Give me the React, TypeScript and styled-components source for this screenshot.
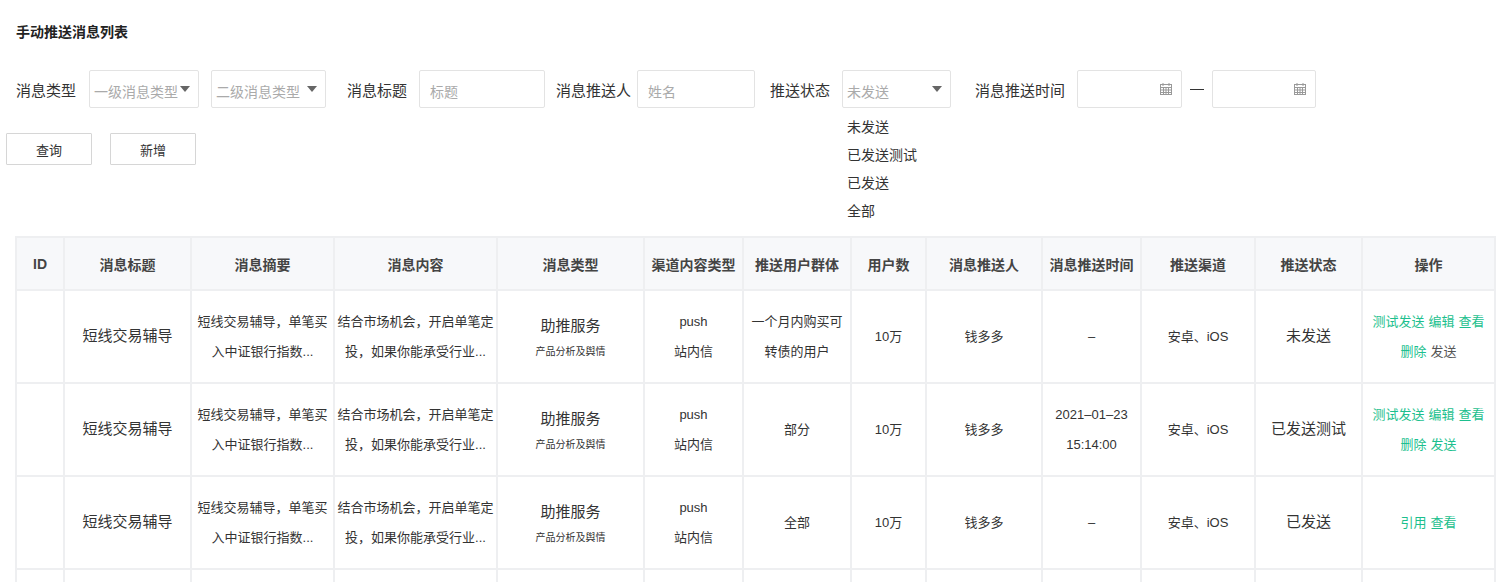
import React from 'react';
import styled, { createGlobalStyle } from 'styled-components';

const GlobalStyle = createGlobalStyle`
  body {
    margin: 0;
    font-family: "Liberation Sans", "Noto Sans CJK SC", sans-serif;
    color: #333;
    background: #fff;
  }
`;

const Page = styled.div`
  padding: 22px 0 0 0;
  height: 582px;
  overflow: hidden;
`;

const Title = styled.h1`
  margin: 0 0 28px 16px;
  font-size: 14px;
  font-weight: bold;
  color: #222;
  line-height: 20px;
`;

const FilterRow = styled.div`
  display: flex;
  align-items: center;
  padding-left: 16px;
  height: 38px;
`;

const Label = styled.span<{ gap?: number }>`
  font-size: 15px;
  color: #333;
  margin-right: ${({ gap }) => gap ?? 12}px;
  margin-left: ${({ gap }) => (gap === undefined ? 0 : 0)}px;
  white-space: nowrap;
`;

const Box = styled.div<{ w: number; ml?: number }>`
  position: relative;
  box-sizing: border-box;
  width: ${({ w }) => w}px;
  margin-left: ${({ ml }) => ml ?? 0}px;
  height: 38px;
  border: 1px solid #e3e3e3;
  border-radius: 2px;
  display: flex;
  align-items: center;
  padding: 0 8px 0 4px;
  font-size: 14px;
  color: #aaa;
`;

const BoxText = styled.span`
  flex: 1;
  white-space: nowrap;
  padding-top: 3px;
`;

const Caret = styled.span`
  width: 0;
  height: 0;
  border-left: 5px solid transparent;
  border-right: 5px solid transparent;
  border-top: 6px solid #666;
`;

const Options = styled.div`
  position: absolute;
  top: 42px;
  left: 4px;
  display: flex;
  flex-direction: column;
  font-size: 14px;
  color: #333;
  line-height: 28px;
  white-space: nowrap;
`;

const Dash = styled.span`
  margin: 0 8px;
  width: 14px;
  height: 1px;
  background: #333;
`;

const ButtonRow = styled.div`
  display: flex;
  gap: 18px;
  padding-left: 6px;
  margin-top: 25px;
`;

const Button = styled.button`
  width: 86px;
  height: 32px;
  border: 1px solid #d6d6d6;
  background: #fff;
  font-family: inherit;
  font-size: 13px;
  color: #333;
  border-radius: 1px;
`;

const Table = styled.table`
  margin: 71px 0 0 15px;
  border-collapse: collapse;
  table-layout: fixed;
  width: 1479px;
  font-size: 13px;
  color: #333;
`;

const Th = styled.th`
  height: 51px;
  background: #f7f8fa;
  border: 2px solid #eeeff1;
  font-size: 14px;
  font-weight: 600;
  color: #444;
  padding: 0;
`;

const Td = styled.td`
  height: 91px;
  border: 2px solid #eeeff1;
  text-align: center;
  vertical-align: middle;
  line-height: 30px;
  padding: 0 2px;
`;

const BigText = styled.span`
  font-size: 15px;
`;

const Small = styled.div`
  font-size: 10px;
  line-height: 20px;
`;

const Link = styled.span<{ off?: boolean }>`
  color: ${({ off }) => (off ? '#555' : '#1dbf8e')};
  margin: 0 2px;
`;

const CalIcon = () => (
  <svg width="14" height="14" viewBox="0 0 14 14" fill="none" stroke="#999" strokeWidth="1">
    <rect x="1.5" y="2.5" width="11" height="10" />
    <path d="M1.5 5.5h11M1.5 8h11M1.5 10.5h11M4.5 5.5v7M7 5.5v7M9.5 5.5v7M4 1v3M10 1v3" />
  </svg>
);

const cols = [48, 127, 143, 163, 147, 99, 108, 75, 116, 99, 114, 107, 133];
const heads = ['ID', '消息标题', '消息摘要', '消息内容', '消息类型', '渠道内容类型', '推送用户群体', '用户数', '消息推送人', '消息推送时间', '推送渠道', '推送状态', '操作'];

type Row = { group: React.ReactNode; time: React.ReactNode; status: string; ops: React.ReactNode };

const rows: Row[] = [
  {
    group: <>一个月内购买可<br />转债的用户</>,
    time: '–',
    status: '未发送',
    ops: <><Link>测试发送</Link><Link>编辑</Link><Link>查看</Link><br /><Link>删除</Link><Link off>发送</Link></>,
  },
  {
    group: '部分',
    time: <>2021–01–23<br />15:14:00</>,
    status: '已发送测试',
    ops: <><Link>测试发送</Link><Link>编辑</Link><Link>查看</Link><br /><Link>删除</Link><Link>发送</Link></>,
  },
  {
    group: '全部',
    time: '–',
    status: '已发送',
    ops: <><Link>引用</Link><Link>查看</Link></>,
  },
];

export default function App() {
  return (
    <Page>
      <GlobalStyle />
      <Title>手动推送消息列表</Title>
      <FilterRow>
        <Label>消息类型</Label>
        <Box w={110} ml={1}><BoxText>一级消息类型</BoxText><Caret /></Box>
        <Box w={115} ml={12}><BoxText>二级消息类型</BoxText><Caret /></Box>
        <Label style={{ marginLeft: 21 }}>消息标题</Label>
        <Box w={126}><BoxText style={{ paddingLeft: 6 }}>标题</BoxText></Box>
        <Label style={{ marginLeft: 11 }} gap={6}>消息推送人</Label>
        <Box w={118}><BoxText style={{ paddingLeft: 6 }}>姓名</BoxText></Box>
        <Label style={{ marginLeft: 15 }}>推送状态</Label>
        <Box w={109}>
          <BoxText>未发送</BoxText><Caret />
          <Options>
            <span>未发送</span>
            <span>已发送测试</span>
            <span>已发送</span>
            <span>全部</span>
          </Options>
        </Box>
        <Label style={{ marginLeft: 24 }}>消息推送时间</Label>
        <Box w={105}><BoxText /><CalIcon /></Box>
        <Dash />
        <Box w={104}><BoxText /><CalIcon /></Box>
      </FilterRow>
      <ButtonRow>
        <Button>查询</Button>
        <Button>新增</Button>
      </ButtonRow>
      <Table>
        <colgroup>
          {cols.map((w, i) => <col key={i} style={{ width: w }} />)}
        </colgroup>
        <thead>
          <tr>{heads.map(h => <Th key={h}>{h}</Th>)}</tr>
        </thead>
        <tbody>
          {rows.map((r, i) => (
            <tr key={i}>
              <Td />
              <Td><BigText>短线交易辅导</BigText></Td>
              <Td>短线交易辅导，单笔买<br />入中证银行指数...</Td>
              <Td>结合市场机会，开启单笔定<br />投，如果你能承受行业...</Td>
              <Td><BigText>助推服务</BigText><Small>产品分析及舆情</Small></Td>
              <Td>push<br />站内信</Td>
              <Td>{r.group}</Td>
              <Td>10万</Td>
              <Td>钱多多</Td>
              <Td>{r.time}</Td>
              <Td>安卓、iOS</Td>
              <Td><BigText>{r.status}</BigText></Td>
              <Td>{r.ops}</Td>
            </tr>
          ))}
          <tr>{cols.map((_, i) => <Td key={i} />)}</tr>
        </tbody>
      </Table>
    </Page>
  );
}
